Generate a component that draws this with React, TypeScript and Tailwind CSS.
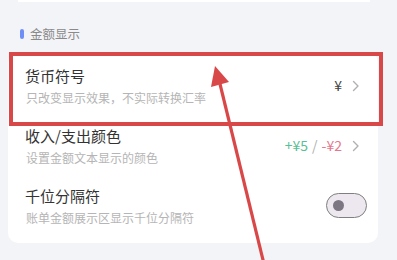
import React from "react";

const font = { fontFamily: '"Noto Sans CJK SC", "Noto Sans", sans-serif' };

function Chevron() {
  return (
    <svg width="8" height="12" viewBox="0 0 8 12" className="ml-[10px]">
      <path d="M1.5 1.5 L6 6 L1.5 10.5" fill="none" stroke="#b0b0b0" strokeWidth="1.4" strokeLinecap="round" strokeLinejoin="round" />
    </svg>
  );
}

function Row({ title, sub, right }: { title: string; sub: string; right: React.ReactNode }) {
  return (
    <div className="flex items-center pl-[17px] pr-[18px] pt-[13px] pb-[6px]">
      <div className="flex-1">
        <div className="text-[15px] leading-[22px] text-[#333333]">{title}</div>
        <div className="mt-[2px] text-[12px] leading-[17px] text-[#b5b5b5] pl-[1px]">{sub}</div>
      </div>
      <div className="flex items-center">{right}</div>
    </div>
  );
}

export default function App() {
  return (
    <div className="relative w-[397px] h-[260px] overflow-hidden bg-[#f3f4f8]" style={font}>
      <div className="ml-[18px] w-[352px] h-[2px] bg-white" />

      {/* section label */}
      <div className="flex items-center pl-[20px] mt-[23px] h-[18px]">
        <div className="w-[4px] h-[10px] rounded-full bg-[#6f8ff7]" />
        <span className="ml-[6px] text-[12.5px] leading-[18px] text-[#8a8a8a]">金额显示</span>
      </div>

      <div className="mt-[9px] ml-[8px] w-[370px] bg-white rounded-[10px] pb-[11px]">
        <Row
          title="货币符号"
          sub="只改变显示效果，不实际转换汇率"
          right={
            <>
              <span className="text-[14px] text-[#444444]">¥</span>
              <Chevron />
            </>
          }
        />
        <Row
          title="收入/支出颜色"
          sub="设置金额文本显示的颜色"
          right={
            <>
              <span className="text-[14px] text-[#5bbf94]">+¥5</span>
              <span className="text-[14px] text-[#b0b0b0] mx-[4px]">/</span>
              <span className="text-[14px] text-[#e4788f]">-¥2</span>
              <Chevron />
            </>
          }
        />
        <Row
          title="千位分隔符"
          sub="账单金额展示区显示千位分隔符"
          right={
            <div className="w-[41px] h-[25px] rounded-full border-[1.5px] border-[#7f7f7f] bg-[#ede8f0] flex items-center pl-[6px] mr-[-7px]">
              <div className="w-[11px] h-[11px] rounded-full bg-[#7b7682]" />
            </div>
          }
        />
      </div>

      {/* annotation box */}
      <div className="absolute left-[9px] top-[52px] w-[374px] h-[74px] border-[4px] border-[#d94848]" />

      {/* annotation arrow */}
      <svg className="absolute left-0 top-0" width="397" height="260" viewBox="0 0 397 260">
        <line x1="264" y1="264" x2="220" y2="84" stroke="#d94848" strokeWidth="3.2" />
        <polygon points="215,66 229,82 211,87" fill="#d94848" />
      </svg>
    </div>
  );
}
